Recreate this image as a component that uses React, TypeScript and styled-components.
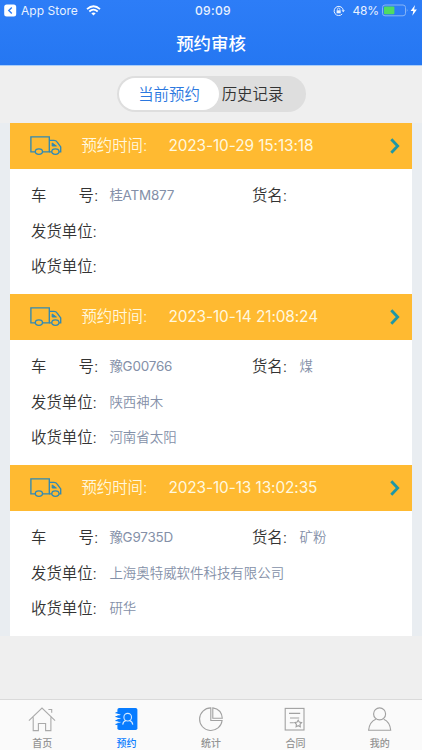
import React from "react";
import styled, { createGlobalStyle } from "styled-components";

const GlobalStyle = createGlobalStyle`
  * { box-sizing: border-box; }
  html, body { margin: 0; padding: 0; background: #efefef; }
  body { font-family: Inter, "Noto Sans CJK SC", sans-serif; }
  svg { display: block; flex: none; }
`;

const Screen = styled.div`
  width: 422px;
  height: 750px;
  display: flex;
  flex-direction: column;
  overflow: hidden;
  background: #efefef;
`;

const Header = styled.header`
  height: 66px;
  flex: none;
  background: linear-gradient(#2d7df7, #2577f2);
  border-bottom: 1px solid #a9cdf8;
  color: #fff;
`;

const StatusBar = styled.div`
  height: 21px;
  display: grid;
  grid-template-columns: 1fr auto 1fr;
  align-items: center;
  padding: 0 3px 0 4px;
  font-size: 12px;
  line-height: 21px;
  color: #e9f2ff;
`;

const StatusGroup = styled.div<{ $end?: boolean }>`
  display: flex;
  align-items: center;
  justify-content: ${(p) => (p.$end ? "flex-end" : "flex-start")};
`;

const AppName = styled.span`
  margin: 0 8px 0 4px;
  letter-spacing: 0.05px;
`;

const Clock = styled.span`
  padding-left: 3px;
  font-size: 12.1px;
  font-weight: 500;
  letter-spacing: 0.3px;
`;

const Percent = styled.span`
  margin: 0 3px 0 7px;
  letter-spacing: -0.15px;
`;

const Title = styled.h1`
  margin: 0;
  height: 45px;
  line-height: 45px;
  text-align: center;
  font-size: 17.4px;
  font-weight: 500;
`;

const Segment = styled.div`
  width: 189px;
  height: 36px;
  flex: none;
  margin: 10px 0 10.5px 117px;
  padding: 2px;
  display: flex;
  border-radius: 18px;
  background: #dedede;
`;

const SegmentItem = styled.button<{ $active?: boolean }>`
  width: ${(p) => (p.$active ? 100 : 67)}px;
  height: 32px;
  border: 0;
  padding: 2px 0 0;
  border-radius: 16px;
  background: ${(p) => (p.$active ? "#fff" : "transparent")};
  color: ${(p) => (p.$active ? "#2b78df" : "#333")};
  font-family: inherit;
  font-size: 15.4px;
  font-weight: 350;
  line-height: 30px;
  white-space: nowrap;
`;

const List = styled.main`
  flex: none;
  padding: 0 10px 0 10.4px;
  background: #e9edf1;
`;

const Card = styled.article`
  height: 171px;
  background: #fff;
`;

const CardHeader = styled.div`
  height: 46px;
  display: flex;
  align-items: center;
  padding: 0 12px 0 20px;
  background: #ffba31;
  color: #fff8df;
  font-size: 15.4px;
  font-weight: 350;
  line-height: 46px;
`;

const HeaderLabel = styled.span`
  width: 87px;
  margin-left: 19px;
  padding-top: 1px;
`;

const HeaderTime = styled.time`
  flex: 1;
  white-space: nowrap;
  font-weight: 400;
  letter-spacing: -0.1px;
`;

const CardBody = styled.div`
  padding: 8px 0 0 20.6px;
`;

const FieldRow = styled.div`
  height: 35.5px;
  display: flex;
  align-items: center;
  white-space: nowrap;
`;

const Label = styled.span<{ $short?: boolean }>`
  width: ${(p) => (p.$short ? 47.6 : 78.4)}px;
  flex: none;
  font-size: 15.4px;
  font-weight: 350;
  color: #333;
`;

const Spread = styled.span`
  width: 63px;
  display: inline-flex;
  justify-content: space-between;
`;

const Value = styled.span<{ $fixed?: boolean }>`
  width: ${(p) => (p.$fixed ? "142.6px" : "auto")};
  letter-spacing: ${(p) => (p.$fixed ? "-0.2px" : "normal")};
  font-size: 13.45px;
  font-weight: ${(p) => (p.$fixed ? 400 : 350)};
  color: #8490a8;
`;

const TabBar = styled.nav`
  height: 51px;
  flex: none;
  margin-top: auto;
  display: grid;
  grid-template-columns: repeat(5, 1fr);
  border-top: 1px solid #dadada;
  background: #fafafa;
`;

const TabItem = styled.a<{ $active?: boolean }>`
  display: flex;
  flex-direction: column;
  align-items: center;
  padding-top: 6px;
  color: ${(p) => (p.$active ? "#087cff" : "#949494")};
`;

const TabLabel = styled.span`
  margin-top: 3px;
  font-size: 10px;
  line-height: 15px;
  font-weight: 500;
`;

const BackIcon = () => (
  <svg width="13" height="13" viewBox="0 0 13 13">
    <rect x="0.2" y="0.5" width="12" height="12" rx="2.5" fill="#fff" />
    <path d="M7.8 3.6 4.8 6.5l3 2.9" fill="none" stroke="#2d7df7" strokeWidth="1.4" />
  </svg>
);

const WifiIcon = () => (
  <svg width="15" height="11" viewBox="0 0 15 11" fill="none" stroke="#fff" strokeWidth="1.8">
    <path d="M1 4.1Q7.5-1.7 14 4.1M3.3 6.5q4.2-3.7 8.4 0" />
    <path d="M5.3 8.3q2.2-1.7 4.4 0L7.5 10.5Z" fill="#fff" stroke="none" />
  </svg>
);

const LockIcon = () => (
  <svg width="12" height="12" viewBox="0 0 12 12" fill="none" stroke="#e9f2ff">
    <path d="M9.2 9A4.6 4.6 0 1 1 10.3 5.3" strokeWidth="1" />
    <path d="M8.5 5.2h3.4l-1.7 2Z" fill="#e9f2ff" stroke="none" />
    <rect x="3.6" y="5.3" width="4.1" height="3" fill="#e9f2ff" stroke="none" />
    <path d="M4.4 5.4V4.3a1.25 1.25 0 0 1 2.5 0v1.1" strokeWidth=".8" />
  </svg>
);

const BatteryIcon = () => (
  <svg width="37" height="13" viewBox="0 0 37 13">
    <rect x=".5" y="1" width="23" height="10.8" rx="2.5" fill="none" stroke="#86b4f6" />
    <rect x="1.9" y="2.6" width="10.5" height="7.7" rx="1" fill="#4fdb63" />
    <path d="M24.8 4.8q1.7 1.6 0 3.2Z" fill="#86b4f6" />
    <path d="m33 1-4.4 6h2.7l-1 4.8 4.6-6.3h-2.8Z" fill="#fff" />
  </svg>
);

const TruckIcon = () => (
  <svg width="32" height="20" viewBox="0 0 32 20" fill="none" stroke="#3189b4" strokeWidth="1.35">
    <path d="M5.2 15.8H.9V.8h18.4v15h-6.7" />
    <path d="M19.3 4.3h4.6c1.6 0 2.5.5 3.3 1.8l3.5 4.8v4.9h-1.6M19.3 15.8h2.6" />
    <path d="M22.2 7v3h4.2Z" fill="#3189b4" strokeWidth="1" />
    <ellipse cx="8.9" cy="15.6" rx="3.6" ry="2.8" />
    <ellipse cx="25.4" cy="15.6" rx="3.6" ry="2.8" />
  </svg>
);

const ChevronIcon = () => (
  <svg width="10" height="16" viewBox="0 0 10 16" fill="none" stroke="#1f97a5" strokeWidth="2.8">
    <path d="m1.3 1.2 6.4 6.8-6.4 6.8" />
  </svg>
);

const HomeIcon = () => (
  <svg width="28" height="27" viewBox="0 0 28 27" fill="none" stroke="#aaa" strokeWidth="1.1">
    <path d="M.9 14.7 14 2.1l13.1 12.6M5.2 11.2v13.4h5.2v-7.1h7.2v7.1h5.3V11.2M20.4 3.5h3.3v3.2" />
  </svg>
);

const BookingIcon = () => (
  <svg width="23" height="27" viewBox="0 0 23 27" fill="none">
    <rect x="2.4" y="2" width="20" height="22" rx="1.8" fill="#087cff" />
    <path d="M2 8.6h2.8M2 12.4h2.8M2 16.2h2.8" stroke="#fafafa" strokeWidth="1.2" strokeLinecap="round" />
    <path d="M1 6.8q2.6-.5 3.4 1M1 10.7q2.6-.5 3.4 1M1 14.6q2.6-.5 3.4 1M1 18.3q2.6-.5 3.4.6" stroke="#087cff" strokeWidth="1.2" strokeLinecap="round" />
    <circle cx="12.7" cy="11.2" r="3.8" stroke="#d8eaff" strokeWidth="1.1" />
    <path d="M7.7 18.6q.4-3.3 3.4-4.2M14.3 14.4q3 .9 3.5 4.2" stroke="#d8eaff" strokeWidth="1.1" />
  </svg>
);

const ChartIcon = () => (
  <svg width="26" height="27" viewBox="0 0 26 27" fill="none" stroke="#a1a1a1" strokeWidth="1.1">
    <path d="M12.8 1.9A11.3 11.3 0 1 0 24.1 14.5H12.8V1.9Z" />
    <path d="M14.8 1.9v10.4h9.5C23.8 6.1 20.4 2.8 14.8 1.9Z" />
  </svg>
);

const ContractIcon = () => (
  <svg width="22" height="27" viewBox="0 0 22 27" fill="none" stroke="#a1a1a1" strokeWidth="1.1">
    <rect x="1.2" y="2.4" width="18.8" height="21.6" />
    <path d="M5 7.4h11.2M6 12h9.2M5.8 16.8h4" />
    <path d="m14.2 14.2 1.1 1.9 2.3.5-1.6 1.7.3 2.4-2.1-1-2.1 1 .3-2.4-1.6-1.7 2.3-.5Z" />
  </svg>
);

const UserIcon = () => (
  <svg width="24" height="27" viewBox="0 0 24 27" fill="none" stroke="#a1a1a1" strokeWidth="1.15">
    <circle cx="11.6" cy="7.9" r="6" />
    <path d="M7.8 13.2C3.6 14.9 1.2 18.7.6 24.2h22.1c-.5-5.5-3-9.3-7-11" />
  </svg>
);

const appointments = [
  { time: "2023-10-29 15:13:18", plate: "桂ATM877", goods: "", sender: "", receiver: "" },
  { time: "2023-10-14 21:08:24", plate: "豫G00766", goods: "煤", sender: "陕西神木", receiver: "河南省太阳" },
  { time: "2023-10-13 13:02:35", plate: "豫G9735D", goods: "矿粉", sender: "上海奥特威软件科技有限公司", receiver: "研华" },
];

const tabs = [
  { name: "首页", Icon: HomeIcon },
  { name: "预约", Icon: BookingIcon, active: true },
  { name: "统计", Icon: ChartIcon },
  { name: "合同", Icon: ContractIcon },
  { name: "我的", Icon: UserIcon },
];

export default function App() {
  return (
    <Screen>
      <GlobalStyle />
      <Header>
        <StatusBar>
          <StatusGroup>
            <BackIcon />
            <AppName>App Store</AppName>
            <WifiIcon />
          </StatusGroup>
          <Clock>09:09</Clock>
          <StatusGroup $end>
            <LockIcon />
            <Percent>48%</Percent>
            <BatteryIcon />
          </StatusGroup>
        </StatusBar>
        <Title>预约审核</Title>
      </Header>
      <Segment>
        <SegmentItem $active>当前预约</SegmentItem>
        <SegmentItem>历史记录</SegmentItem>
      </Segment>
      <List>
        {appointments.map((item) => (
          <Card key={item.time}>
            <CardHeader>
              <TruckIcon />
              <HeaderLabel>预约时间:</HeaderLabel>
              <HeaderTime>{item.time}</HeaderTime>
              <ChevronIcon />
            </CardHeader>
            <CardBody>
              <FieldRow>
                <Label>
                  <Spread>
                    <span>车</span>
                    <span>号</span>
                  </Spread>
                  :
                </Label>
                <Value $fixed>{item.plate}</Value>
                <Label $short>货名:</Label>
                <Value>{item.goods}</Value>
              </FieldRow>
              <FieldRow>
                <Label>发货单位:</Label>
                <Value>{item.sender}</Value>
              </FieldRow>
              <FieldRow>
                <Label>收货单位:</Label>
                <Value>{item.receiver}</Value>
              </FieldRow>
            </CardBody>
          </Card>
        ))}
      </List>
      <TabBar>
        {tabs.map(({ name, Icon, active }) => (
          <TabItem key={name} $active={active}>
            <Icon />
            <TabLabel>{name}</TabLabel>
          </TabItem>
        ))}
      </TabBar>
    </Screen>
  );
}
